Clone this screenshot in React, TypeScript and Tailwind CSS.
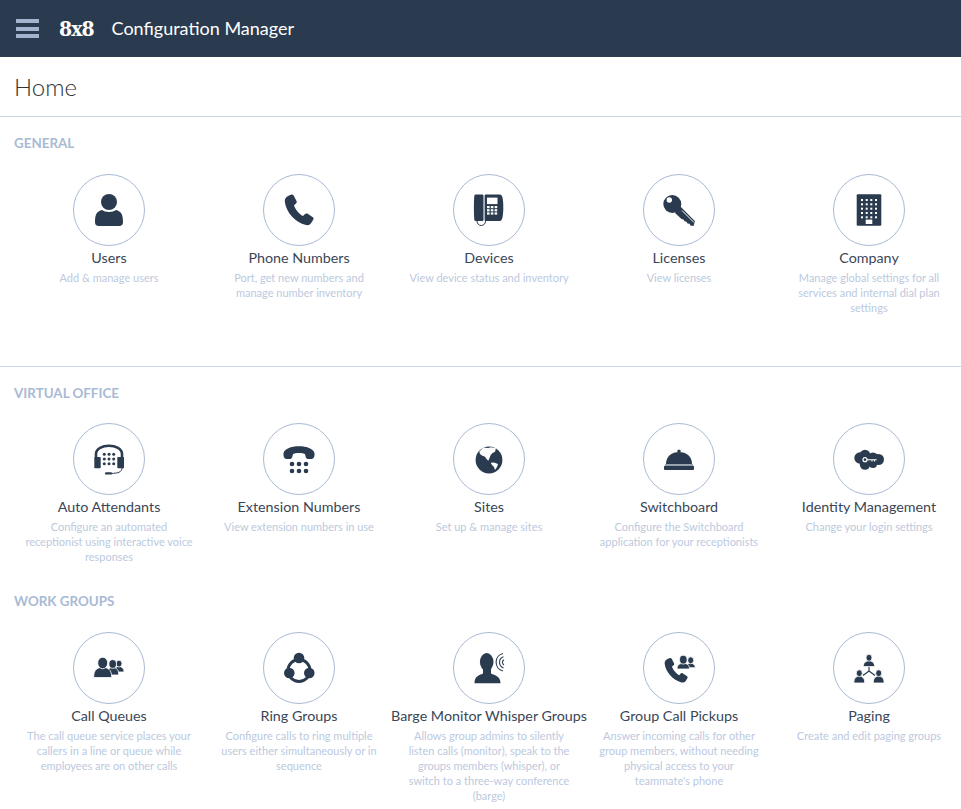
import type { ReactNode } from 'react';

const INK = '#2b3b4f';

const PHONE =
  'M8 3.5 L10.5 2.5 C11.5 2.2 12.3 2.8 12.8 3.8 L15.5 9 C16 10 15.7 11 15 11.6 L13 13.2 C14 17 18 22 22 24 L24 22 C24.8 21.3 25.8 21.2 26.7 21.8 L31.5 25 C32.6 25.7 32.8 26.8 32.2 27.8 L30.5 30.5 C29.5 32.5 27.5 33.5 25 33 C14 30.5 5 20 3.8 9.5 C3.5 6.5 5.5 4.5 8 3.5Z';

// head + shoulders, white outline keeps overlapping people apart
const Person = ({ cx, cy, r, w, bottom }: { cx: number; cy: number; r: number; w: number; bottom: number }) => {
  const top = cy + r * 0.7;
  return (
    <g stroke="#fff" strokeWidth="0.8">
      <path
        d={`M${cx - w} ${bottom} C${cx - w} ${top + 2} ${cx - r} ${top + 2} ${cx} ${top} C${cx + r} ${top + 2} ${cx + w} ${top + 2} ${cx + w} ${bottom} Z`}
      />
      <ellipse cx={cx} cy={cy} rx={r} ry={r * 1.15} />
    </g>
  );
};

const Users = () => (
  <>
    <path d="M4 30 C4 22 6 19.5 11 18 C14 20.5 22 20.5 25 18 C30 19.5 32 22 32 30 C32 32.5 31 34 28 34 L8 34 C5 34 4 32.5 4 30Z" />
    <circle cx="18" cy="10" r="8" />
  </>
);

const Devices = () => (
  <>
    <path d="M5 2.5 L11 2.5 C12 2.5 12.5 3 12.5 4 L12.5 27.5 C12.5 28.5 12 29 11 29 L5 29 C4 29 3.3 28.5 3.3 27.5 C2.8 20 2.8 10 3.3 4 C3.4 3 4 2.5 5 2.5Z" />
    <path d="M15 2.5 L29 2.5 C31 2.5 32.3 6 32.3 15.5 C32.3 25 31 29 29 29 L15 29 C14 29 13.6 28.5 13.6 27.5 L13.6 4 C13.6 3 14 2.5 15 2.5Z" />
    <rect x="16" y="5.6" width="10.5" height="6.5" fill="#fff" />
    {[14, 17.2, 20.4].flatMap((y) =>
      [16, 19.8, 23.6].map((x) => <rect key={`${x}-${y}`} x={x} y={y} width="2.6" height="2.2" fill="#fff" />)
    )}
    <path d="M6 29 C6 35 14.5 35 14.5 29" fill="none" stroke={INK} strokeWidth="1" />
  </>
);

const LicenseKey = () => (
  <>
    <path d="M17 12 L34 29.3 L32.5 34 L29.5 33.5 L28.5 31.7 L26.5 31.5 L25.5 29.7 L23.5 29.3 L22.5 27.5 L20.5 27 L14 21Z" />
    <circle cx="11.3" cy="12" r="9" />
    <circle cx="8.3" cy="8" r="2.7" fill="#fff" />
    <path d="M21 18.5 L33 30.5" stroke="#fff" strokeWidth="1" fill="none" />
  </>
);

const Company = () => (
  <>
    <rect x="5.7" y="2.3" width="24.6" height="31.4" rx="1" />
    {[8, 12.3, 16.7, 21, 25.3].flatMap((y) =>
      [11, 15.7, 20.3, 25].map((x) => <rect key={`${x}-${y}`} x={x - 1} y={y - 1} width="2" height="2" fill="#fff" />)
    )}
    <rect x="14.7" y="27.6" width="6.6" height="4.4" fill="#fff" />
  </>
);

const Headset = () => (
  <>
    <path d="M5 17 L5 13 C5 2 31 2 31 13 L31 17" fill="none" stroke={INK} strokeWidth="2.6" />
    <rect x="3.3" y="16" width="6.4" height="11.3" rx="0.8" />
    <rect x="26.3" y="16" width="6.7" height="11.3" rx="0.8" />
    {[13.3, 18, 22.7].flatMap((y) => [13.3, 18, 22.7].map((x) => <circle key={`${x}-${y}`} cx={x} cy={y} r="1.5" />))}
    <path d="M31 27 C31 31 27 32.4 20 32.4" fill="none" stroke={INK} strokeWidth="1" />
    <rect x="14" y="31.2" width="7" height="2.4" rx="1.2" />
  </>
);

const Extension = () => (
  <>
    <path d="M2.5 12.5 C3 8 10 5.3 18 5.3 C26 5.3 33 8 33.5 12.5 C33.8 15 33 17.5 31 18 L26.5 18 C24.8 17.5 24.5 15.5 24 13 C22 11.5 14 11.5 12 13 C11.5 15.5 11.2 17.5 9.5 18 L5 18 C3 17.5 2.2 15 2.5 12.5Z" />
    {[23, 30].flatMap((y) => [11, 18, 25].map((x) => <circle key={`${x}-${y}`} cx={x} cy={y} r="2.3" />))}
  </>
);

const Globe = () => (
  <>
    <circle cx="18" cy="19" r="13.4" />
    <path
      fill="#fff"
      d="M8.3 10.7 L12.3 6.5 L17 7 L20 6.2 L25 7.3 L24 10.7 L21.5 12 L19.7 14 L18.5 17 L17.3 19.7 L15.5 18 L14 15.7 L11 14.5 L9 13Z M19.7 21.7 L23 21.5 L27 23 L26 26 L24 29 L23 26 L21 24Z"
    />
  </>
);

const Bell = () => (
  <>
    <rect x="16.4" y="8.7" width="3.2" height="3" rx="1" />
    <path d="M5 23 C5 15 11 11 18 11 C25 11 31 15 31 23Z" />
    <rect x="4" y="23" width="28" height="1.7" fill="#9aa5b3" />
    <rect x="3" y="24.7" width="30" height="4.4" rx="1" />
  </>
);

const CloudKey = () => (
  <>
    <circle cx="9" cy="17" r="5.7" />
    <circle cx="14" cy="14" r="5.3" />
    <circle cx="14" cy="23.5" r="5.2" />
    <circle cx="22" cy="23" r="4" />
    <circle cx="22" cy="17" r="5.5" />
    <circle cx="27.5" cy="18.5" r="5.5" />
    <circle cx="14" cy="18.7" r="2" fill="none" stroke="#fff" strokeWidth="1.2" />
    <path d="M16 18.7 L25.7 18.7 M21 19 L21 20.4 M23.5 19 L23.5 20.4" stroke="#fff" strokeWidth="1.1" fill="none" />
  </>
);

const Queues = () => (
  <>
    <Person cx={28} cy={13.6} r={3} w={5} bottom={22} />
    <Person cx={21.7} cy={14} r={3.8} w={6} bottom={25} />
    <Person cx={11.7} cy={13} r={5} w={9} bottom={27.5} />
  </>
);

const Ring = () => (
  <>
    <circle cx="18" cy="20.5" r="11" fill="none" stroke={INK} strokeWidth="3" />
    <circle cx="18" cy="8" r="5.3" />
    <circle cx="8.3" cy="23" r="5.3" />
    <circle cx="28.3" cy="23" r="5.3" />
  </>
);

const Barge = () => (
  <>
    <path d="M3.5 33.3 C3.5 26 8 25.5 12 23.5 L12 19 L20 19 L20 23.5 C24 25.5 29.5 26 29.5 33.3Z" />
    <ellipse cx="15.7" cy="12" rx="6.8" ry="9" />
    <path
      d="M32 3.5 A9 9 0 0 0 32 21 M32.5 6.7 A6 6 0 0 0 32.5 18 M33 9.7 A3 3 0 0 0 33 15"
      fill="none"
      stroke={INK}
      strokeWidth="1.1"
    />
  </>
);

const Pickups = () => (
  <>
    <path d={PHONE} transform="translate(0.6 6) scale(0.8)" />
    <Person cx={29.7} cy={10.3} r={3} w={4.6} bottom={17.7} />
    <Person cx={22.3} cy={9.7} r={3.8} w={6.2} bottom={19} />
  </>
);

const Paging = () => (
  <>
    <path d="M18 16 L18 21 M18 21 L12 25.5 M18 21 L24 25.5" fill="none" stroke={INK} strokeWidth="1.2" />
    <Person cx={18} cy={7.8} r={3} w={5.7} bottom={16.6} />
    <Person cx={8.3} cy={23.2} r={3} w={5.4} bottom={33} />
    <Person cx={27.7} cy={23.2} r={3} w={5.4} bottom={33} />
  </>
);

type Item = { icon: ReactNode; title: string; desc: string };

const GENERAL: Item[] = [
  { icon: <Users />, title: 'Users', desc: 'Add & manage users' },
  { icon: <path d={PHONE} />, title: 'Phone Numbers', desc: 'Port, get new numbers and manage number inventory' },
  { icon: <Devices />, title: 'Devices', desc: 'View device status and inventory' },
  { icon: <LicenseKey />, title: 'Licenses', desc: 'View licenses' },
  { icon: <Company />, title: 'Company', desc: 'Manage global settings for all services and internal dial plan settings' },
];

const VIRTUAL_OFFICE: Item[] = [
  { icon: <Headset />, title: 'Auto Attendants', desc: 'Configure an automated receptionist using interactive voice responses' },
  { icon: <Extension />, title: 'Extension Numbers', desc: 'View extension numbers in use' },
  { icon: <Globe />, title: 'Sites', desc: 'Set up & manage sites' },
  { icon: <Bell />, title: 'Switchboard', desc: 'Configure the Switchboard application for your receptionists' },
  { icon: <CloudKey />, title: 'Identity Management', desc: 'Change your login settings' },
];

const WORK_GROUPS: Item[] = [
  { icon: <Queues />, title: 'Call Queues', desc: 'The call queue service places your callers in a line or queue while employees are on other calls' },
  { icon: <Ring />, title: 'Ring Groups', desc: 'Configure calls to ring multiple users either simultaneously or in sequence' },
  { icon: <Barge />, title: 'Barge Monitor Whisper Groups', desc: 'Allows group admins to silently listen calls (monitor), speak to the groups members (whisper), or switch to a three-way conference (barge)' },
  { icon: <Pickups />, title: 'Group Call Pickups', desc: "Answer incoming calls for other group members, without needing physical access to your teammate's\u00a0phone" },
  { icon: <Paging />, title: 'Paging', desc: 'Create and edit paging groups' },
];

const Tile = ({ icon, title, desc }: Item) => (
  <div className="flex flex-col items-center text-center">
    <div className="flex h-[72px] w-[72px] items-center justify-center rounded-full border border-[#a9bad4]">
      <svg width="36" height="36" viewBox="0 0 36 36" fill={INK}>
        {icon}
      </svg>
    </div>
    <div className="mt-[2px] whitespace-nowrap text-[14.3px] leading-5 text-[#3a4656]">{title}</div>
    <p className="mt-[2px] w-[167.5px] text-[11px] leading-[15px] text-[#bcc9de]">{desc}</p>
  </div>
);

const Section = ({ label, items, className, gridClass }: { label: string; items: Item[]; className: string; gridClass: string }) => (
  <section className={className}>
    <h2 className="pl-[14px] pt-[18px] text-[13.4px] font-bold leading-4 text-[#a9bad4]">{label}</h2>
    <div className={`${gridClass} grid grid-cols-[repeat(5,190px)] pl-[14px]`}>
      {items.map((item) => (
        <Tile key={item.title} {...item} />
      ))}
    </div>
  </section>
);

export default function App() {
  return (
    <div className="h-[809px] overflow-hidden bg-white font-['Lato',sans-serif]">
      <header className="flex h-[57px] items-center bg-[#2b3b4f] pl-4 text-white">
        <div className="flex w-[23px] flex-col gap-[3.5px]">
          <span className="h-[4px] bg-[#a3b4cf]" />
          <span className="h-[4px] bg-[#a3b4cf]" />
          <span className="h-[4px] bg-[#a3b4cf]" />
        </div>
        <span className="ml-5 font-['DejaVu_Serif',serif] text-[21px] font-bold tracking-[-1px] [font-stretch:condensed]">8x8</span>
        <span className="ml-[18px] text-[18px]">Configuration Manager</span>
      </header>
      <div className="flex h-[60px] items-center border-b border-[#c9d5e8] pl-[14px] text-[24px] font-light text-[#333]">
        Home
      </div>
      <Section label="GENERAL" items={GENERAL} gridClass="mt-[23px]" className="h-[250px] border-b border-[#c9d5e8]" />
      <Section label="VIRTUAL OFFICE" items={VIRTUAL_OFFICE} gridClass="mt-[22px]" className="h-[208px]" />
      <Section label="WORK GROUPS" items={WORK_GROUPS} gridClass="mt-[23px]" className="" />
    </div>
  );
}
